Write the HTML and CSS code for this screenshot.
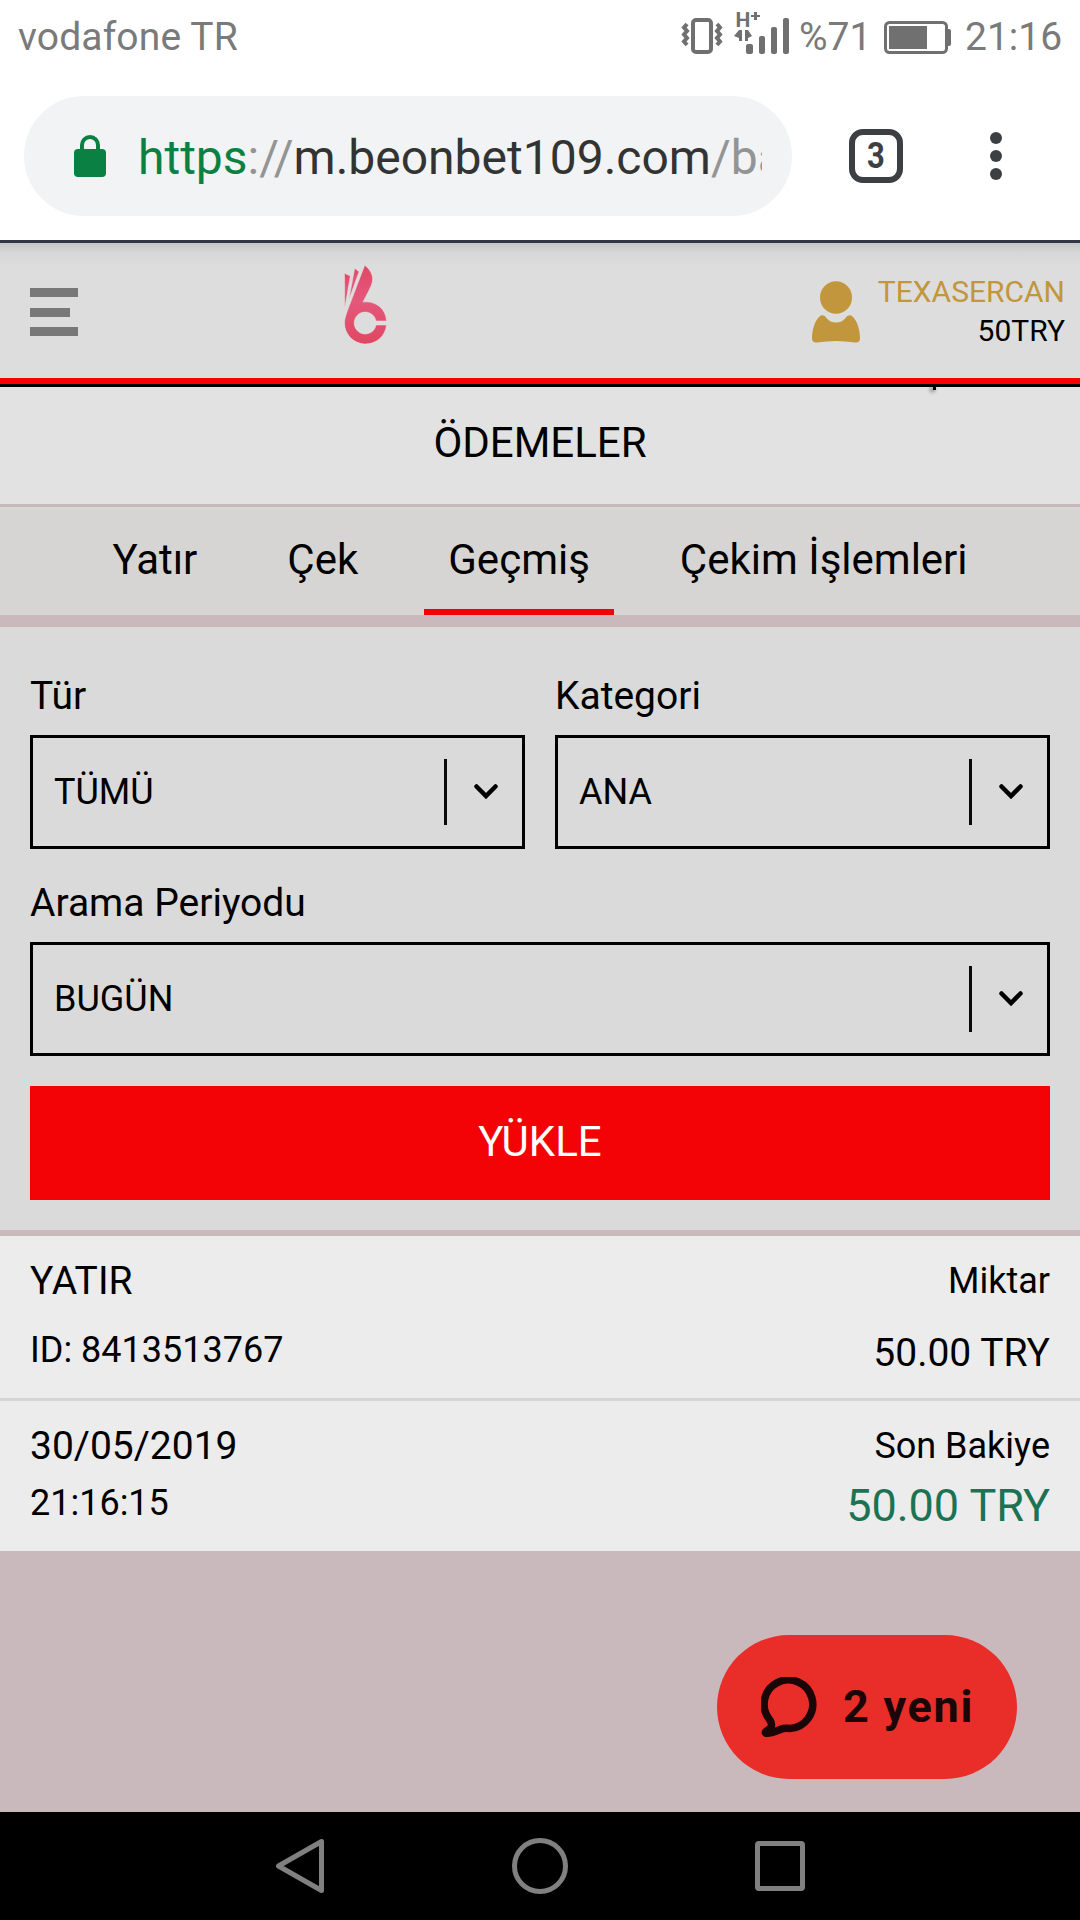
FILE: index.html
```html
<!DOCTYPE html>
<html lang="tr">
  <head>
    <meta charset="utf-8">
    <title>Ödemeler</title>
    <link rel="stylesheet" href="styles.css">
  </head>
  <body>
    <!-- status bar -->
    <div class="status">
      <span class="carrier">vodafone TR</span>
      <svg class="status-icons" width="110" height="44" viewBox="0 0 110 44" fill="#707070">
        <rect x="11" y="10" width="18" height="32" rx="3" fill="none" stroke="#707070" stroke-width="4"/>
        <path d="M5 14l-3 3.500 3 3.500-3 3.500 3 3.500-3 3.500 3 3.500M35 14l3 3.500-3 3.500 3 3.500-3 3.500 3 3.500-3 3.500" fill="none" stroke="#707070" stroke-width="4"/>
        <path d="M60 20v11h-3v-3l-5-2 5-6zM63 20h3l4 6-4 2v3h-3z"/>
        <rect x="64" y="34" width="7" height="10" rx="2"/>
        <rect x="77" y="26" width="6" height="18" rx="2"/>
        <rect x="89" y="17" width="6" height="27" rx="2"/>
        <rect x="101" y="8" width="6" height="36" rx="2"/>
        <text x="53.500" y="17" class="net">H</text>
        <path d="M72 2h3v3h3v2h-3v3h-3v-3h-3v-2h3z"/>
      </svg>
      <span class="percent">%71</span>
      <svg class="battery" width="68" height="34" viewBox="0 0 68 34" fill="#707070">
        <rect x="1.5" y="1.5" width="61" height="30" rx="4" fill="none" stroke="#707070" stroke-width="3"/>
        <rect x="5" y="5" width="38" height="23"/>
        <path d="M64 8h1q2 0 2 2v13q0 2-2 2h-1z"/>
      </svg>
      <span class="clock">21:16</span>
    </div>

    <!-- browser toolbar -->
    <div class="toolbar">
      <div class="url-box">
        <svg class="lock" width="32" height="42" viewBox="0 0 32 42">
          <path d="M8 16V10a8 8 0 0 1 16 0v6" fill="none" stroke="#0b8043" stroke-width="4"/>
          <rect y="14" width="32" height="28" rx="4" fill="#0b8043"/>
        </svg>
        <div class="url"><span class="secure">https</span><span class="dim">://</span>m.beonbet109.com<span class="dim">/ba</span></div>
      </div>
      <div class="tab-count"><span>3</span></div>
      <svg class="dots" width="12" height="48" viewBox="0 0 12 48" fill="#3c4043">
        <circle cx="6" cy="6" r="6"/><circle cx="6" cy="24" r="6"/><circle cx="6" cy="42" r="6"/>
      </svg>
    </div>

    <!-- site header -->
    <header class="header">
      <div class="menu"><i></i><i class="short"></i><i></i></div>
      <svg class="logo" width="43" height="80" viewBox="0 0 43 80">
        <defs>
          <linearGradient id="pink" x1="0" y1="0" x2="0" y2="1">
            <stop offset="0" stop-color="#e04866"/>
            <stop offset="0.45" stop-color="#e4587c"/>
            <stop offset="1" stop-color="#df4761"/>
          </linearGradient>
        </defs>
        <g fill="url(#pink)" stroke="#ebe4e5" stroke-width="0.5">
          <path d="M20.7 0.3C26 4 28.8 10 28.6 14.5C28.5 20 24 27 19 37C32 35.500 42 44 42.500 56H32A11 11 0 1 0 32 60H42.500A21.050 21.050 0 0 1 0.500 58C0.500 54 2 50 3.300 46Z"/>
          <path d="M10.700 3.300L15 6.700L4.800 35Z"/>
          <path d="M0.500 8.300L6.300 11L0.800 43Z"/>
        </g>
      </svg>
      <div class="account">
        <svg class="avatar" width="48" height="62" viewBox="0 0 48 62" fill="#c2963c">
          <ellipse cx="24" cy="16.500" rx="16" ry="16.300"/>
          <path d="M8 35Q12 33 14.500 37Q18 41.500 24 41.500Q30 41.500 33.500 37Q36 33 40 35C46 40 48 51 48 57Q48 62 43 61.500Q24 58.500 5 61.500Q0 62 0 57C0 51 2 40 8 35Z"/>
        </svg>
        <div class="names">
          <div class="user">TEXASERCAN</div>
          <div>50TRY</div>
        </div>
      </div>
    </header>

    <h1 class="title">ÖDEMELER<i class="tick"></i></h1>

    <nav class="tabs">
      <a>Yatır</a>
      <a>Çek</a>
      <a class="active">Geçmiş</a>
      <a>Çekim İşlemleri</a>
    </nav>

    <!-- filters -->
    <section class="filters">
      <div class="fields">
        <div class="field">
          <label>Tür</label>
          <div class="select">TÜMÜ<span class="arrow"><svg width="24" height="16" viewBox="0 0 24 16"><path d="M2.500 2.500L12 12L21.500 2.500"/></svg></span></div>
        </div>
        <div class="field">
          <label>Kategori</label>
          <div class="select">ANA<span class="arrow"><svg width="24" height="16" viewBox="0 0 24 16"><path d="M2.500 2.500L12 12L21.500 2.500"/></svg></span></div>
        </div>
        <div class="field wide">
          <label>Arama Periyodu</label>
          <div class="select">BUGÜN<span class="arrow"><svg width="24" height="16" viewBox="0 0 24 16"><path d="M2.500 2.500L12 12L21.500 2.500"/></svg></span></div>
        </div>
      </div>
      <div class="load">YÜKLE</div>
    </section>

    <!-- history -->
    <section class="history">
      <div class="row first">
        <div class="col">
          <div class="big">YATIR</div>
          <div>ID: 8413513767</div>
        </div>
        <div class="col right">
          <div>Miktar</div>
          <div class="big">50.00 TRY</div>
        </div>
      </div>
      <div class="row second">
        <div class="col">
          <div class="big">30/05/2019</div>
          <div>21:16:15</div>
        </div>
        <div class="col right">
          <div>Son Bakiye</div>
          <div class="balance">50.00 TRY</div>
        </div>
      </div>
    </section>

    <div class="chat">
      <svg width="57" height="60" viewBox="0 0 57 60" fill="none" stroke="#1a0606" stroke-width="7.500" stroke-linejoin="round">
        <path d="M8.500 42.500A24.300 24.300 0 1 1 29 51.500Q23 51 20.500 52Q10 56.500 5 56.200Q3 55.500 7.500 52.500Q13 49 8.500 42.500Z"/>
      </svg>
      <span>2 yeni</span>
    </div>

    <!-- android navigation -->
    <div class="android">
      <svg width="48" height="54" viewBox="0 0 48 54"><path d="M45.500 2.500V51.500L2.500 27Z"/></svg>
      <svg width="56" height="56" viewBox="0 0 56 56"><circle cx="28" cy="28" r="25.500"/></svg>
      <svg width="50" height="50" viewBox="0 0 50 50"><rect x="2.500" y="2.500" width="45" height="45" rx="1.500"/></svg>
    </div>
  </body>
</html>
```

FILE: styles.css
```css
* {
  box-sizing: border-box;
}

body {
  margin: 0;
  width: 1080px;
  height: 1920px;
  display: flex;
  flex-direction: column;
  position: relative;
  overflow: hidden;
  background: #c9b9bc;
  color: #000;
  font-family: Roboto, "Liberation Sans", sans-serif;
  font-size: 36px;
}

svg {
  display: block;
  flex: none;
}

/* status bar */
.status {
  display: flex;
  height: 72px;
  padding: 0 18px;
  background: #fff;
  color: #7a7a7a;
  font-size: 39px;
  line-height: 75px;
}

.carrier {
  flex: 1;
  letter-spacing: 0.15px;
}

.status-icons {
  margin: 10px 7px 0 0;
  overflow: visible;
}

.net {
  font-size: 21px;
  font-weight: bold;
}

.percent {
  width: 85px;
}

.battery {
  margin: 21px 13px 0 0;
}

.clock {
  width: 97px;
}

/* browser toolbar */
.toolbar {
  display: flex;
  align-items: center;
  height: 171px;
  padding: 0 78px 0 24px;
  background: #fff;
  border-bottom: 3px solid #333644;
}

.url-box {
  display: flex;
  align-items: center;
  width: 768px;
  height: 120px;
  padding: 0 30px 0 50px;
  border-radius: 60px;
  background: #f1f3f4;
}

.lock {
  margin-right: 32px;
}

.url {
  flex: 1;
  padding-top: 4px;
  overflow: hidden;
  white-space: nowrap;
  font-size: 48px;
  line-height: 64px;
  color: #333;
}

.secure {
  color: #0b8043;
}

.dim {
  color: #949494;
}

.tab-count {
  width: 54px;
  height: 54px;
  margin: 0 87px 0 57px;
  border: 6px solid #3c4043;
  border-radius: 14px;
  color: #3c4043;
  font-size: 36px;
  font-weight: bold;
  line-height: 42px;
  text-align: center;
}

.tab-count span {
  display: block;
  transform: scaleX(0.86);
}

/* site header */
.header {
  display: flex;
  align-items: center;
  height: 144px;
  padding: 0 15px 0 30px;
  background: linear-gradient(#c4c7c5, #d5d6d5 9px, #dddddd 22px);
  border-bottom: 3px solid #000;
  box-shadow: inset 0 -6px #f30305;
}

.menu {
  display: flex;
  flex-direction: column;
  gap: 10.5px;
  width: 48px;
  margin-bottom: 3px;
}

.menu i {
  height: 9px;
  background: #787878;
}

.menu .short {
  width: 40px;
}

.logo {
  margin: 0 0 17px 266px;
}

.account {
  flex: 1;
  display: flex;
  justify-content: flex-end;
  align-items: center;
  gap: 18px;
  padding-bottom: 6px;
  text-align: right;
  font-size: 30px;
  line-height: 39px;
}

.avatar {
  margin-top: 3px;
}

.user {
  color: #c2963c;
}

.title {
  position: relative;
  height: 120px;
  margin: 0;
  padding-bottom: 6px;
  background: #e2e2e2;
  border-bottom: 3px solid #c9b9bc;
  font-size: 42px;
  font-weight: normal;
  line-height: 111px;
  text-align: center;
}

/* end of a glyph that sticks out from under the header */
.tick {
  position: absolute;
  top: 0;
  left: 933px;
  width: 3px;
  height: 3px;
  background: #000;
  box-shadow: -2px 1px 4px #000;
}

.tabs {
  display: flex;
  justify-content: center;
  gap: 42px;
  height: 108px;
  background: #d6d5d3;
  border-top: 3px solid #d9d8d8;
}

.tabs a {
  padding: 0 24px;
  border-bottom: 6px solid transparent;
  font-size: 42px;
  line-height: 100px;
}

.tabs .active {
  border-color: #f30305;
}

/* filters */
.filters {
  height: 615px;
  padding: 30px;
  background: #dadada;
  background-clip: padding-box;
  border: solid #c9b9bc;
  border-width: 12px 0 0;
}

.fields {
  display: grid;
  grid-template-columns: 1fr 1fr;
  gap: 15px 30px;
}

.wide {
  grid-column: span 2;
}

.field label {
  display: block;
  font-size: 39px;
  line-height: 78px;
}

.select {
  display: flex;
  justify-content: space-between;
  align-items: center;
  height: 114px;
  padding-left: 21px;
  border: 3px solid #000;
}

.arrow {
  display: flex;
  align-items: center;
  width: 78px;
  height: 66px;
  padding-left: 27px;
  border-left: 3px solid #0a0a0a;
}

.arrow path {
  fill: none;
  stroke: #000;
  stroke-width: 4.5;
  stroke-linecap: round;
}

.load {
  height: 114px;
  margin-top: 30px;
  background: #f30305;
  color: #fff;
  font-size: 42px;
  line-height: 111px;
  text-align: center;
}

/* history */
.history {
  margin-top: 6px;
  background: #ececec;
  line-height: 45px;
}

.row {
  display: flex;
  justify-content: space-between;
  padding: 23px 30px 0;
}

.first {
  height: 165px;
  border-bottom: 3px solid #d6d5d3;
}

.second {
  height: 150px;
}

.col {
  display: flex;
  flex-direction: column;
  gap: 24px;
}

.right {
  gap: 27px;
  text-align: right;
}

.second .col {
  gap: 12px;
}

.second .right {
  gap: 14px;
}

.big {
  font-size: 39px;
}

.balance {
  color: #1b7353;
  font-size: 45px;
}

.chat {
  position: absolute;
  top: 1635px;
  left: 717px;
  display: flex;
  align-items: center;
  gap: 25px;
  width: 300px;
  height: 144px;
  padding-left: 44px;
  border-radius: 72px;
  background: #e92d29;
  color: #1a0606;
  font-size: 45px;
  font-weight: bold;
  letter-spacing: 1.7px;
}

.chat span {
  padding-bottom: 2px;
}

/* android navigation */
.android {
  display: flex;
  align-items: center;
  gap: 187.5px;
  height: 108px;
  margin-top: auto;
  padding-left: 276px;
  background: #000;
}

.android svg {
  fill: none;
  stroke: #808080;
  stroke-width: 5;
  stroke-linejoin: round;
}
```
